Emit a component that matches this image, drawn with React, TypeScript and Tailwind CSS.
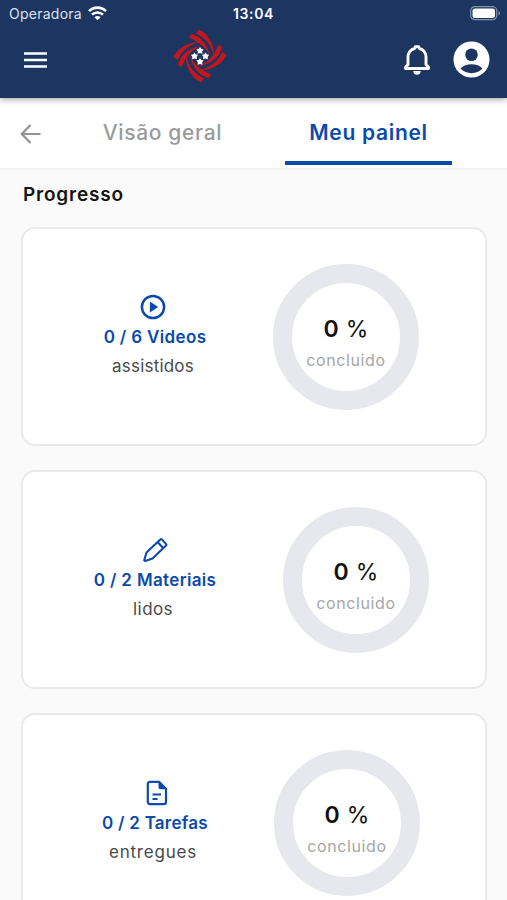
import React from 'react';

interface ProgressItem {
  id: string;
  count: string;
  label: string;
  percent: number;
  icon: React.ReactNode;
  iconClass: string;
  titleClass: string;
  labelClass: string;
  ringClass: string;
}

const PlayIcon = () => (
  <svg width="26" height="26" viewBox="0 0 26 26" fill="none">
    <circle cx="13" cy="13" r="11.1" stroke="#0b4aad" strokeWidth="2.5" />
    <path d="M9.9 7.6v10.8l8.3-5.4z" fill="#0b4aad" />
  </svg>
);

const PencilIcon = () => (
  <svg width="26" height="26" viewBox="0 0 26 26" fill="none" stroke="#0b4aad" strokeWidth="2.1" strokeLinejoin="round">
    <path d="M18.3 2.4 4.500 15.500 2.200 23.200 3.200 24 10.500 21.500 24 8.400c.5-.5.5-1 0-1.500L19.900 2.400c-.5-.5-1.100-.5-1.600 0z" />
    <path d="m15.6 5 5.500 6" />
  </svg>
);

const FileIcon = () => (
  <svg width="22" height="26" viewBox="0 0 22 26" fill="none">
    <path d="M4 1.800h9l7 7V22a2.200 2.200 0 0 1-2.200 2.200H4A2.200 2.200 0 0 1 1.800 22V4A2.200 2.200 0 0 1 4 1.800z" stroke="#0b4aad" strokeWidth="2.2" strokeLinejoin="round" />
    <path d="M12.500 1.500v5.800a2 2 0 0 0 2 2h6z" fill="#0b4aad" />
    <path d="M6.500 14.500h8.500M6.500 19h5" stroke="#0b4aad" strokeWidth="2.1" />
  </svg>
);

const Logo = () => (
  <svg width="54" height="54" viewBox="-27 -27 54 54" fill="none">
    {[0, 90, 180, 270].map((angle) => (
      <g key={angle} transform={`rotate(${angle})`} fill="#c4161c">
        <path d="M-1-26.500C6-23.500 15-13 14 1 12-11 4-19-4-22.500z" />
        <path d="M-9-22.500C-1-20 8-13 10 1 6-9-1-14-11-18.500z" />
      </g>
    ))}
    {[[0, -5.5], [5.5, 0], [0, 5.5], [-5.5, 0]].map(([x, y]) => (
      <path key={`${x},${y}`} transform={`translate(${x} ${y})`} d="M0-3.600 1.400-1.600 3.600-1.200 2.200.8 2.400 3.200 0 2.500-2.400 3.200-2.200.8-3.600-1.200-1.400-1.600z" fill="#fff" />
    ))}
  </svg>
);

const StatusBar = () => (
  <div className="grid h-7 grid-cols-3 items-center pl-[9px] pr-[6px] text-[14px]">
    <div className="-mt-0.5 flex items-center gap-[6px]">
      <span className="tracking-[0.25px] text-[#dce2ec]">Operadora</span>
      <svg width="19" height="15" viewBox="0 0 19 15" fill="none" stroke="#fff" strokeWidth="2.6">
        <path d="M1 5.200a12 12 0 0 1 17 0M4 8.700a7.800 7.800 0 0 1 11 0" />
        <path d="M6.400 11.200a4.400 4.400 0 0 1 6.200 0L9.500 14.300z" fill="#fff" stroke="none" />
      </svg>
    </div>
    <span className="-mt-0.5 -ml-[3px] text-center font-semibold tracking-[0.6px]">13:04</span>
    <svg className="-mt-0.5 justify-self-end" width="31" height="15" viewBox="0 0 31 15">
      <rect x=".7" y=".7" width="26" height="13" rx="4" fill="none" stroke="#8291ae" strokeWidth="1.2" />
      <rect x="2.5" y="2.5" width="22.5" height="9.5" rx="2.5" fill="#fff" />
      <path d="M28.500 5v4.500c2-.8 2-3.700 0-4.500z" fill="#8291ae" />
    </svg>
  </div>
);

const Header = () => (
  <header className="relative z-10 h-[98px] bg-[#1d3661] text-white shadow-[0_2px_6px_rgba(40,20,20,0.35)]">
    <StatusBar />
    <div className="flex h-[63px] items-center pl-6 pr-[17px]">
      <svg width="23" height="16" viewBox="0 0 23 16" stroke="#fff" strokeWidth="2.6">
        <path d="M0 1.500h23M0 8h23M0 14.500h23" />
      </svg>
      <div className="ml-[126px] -mt-[7px]">
        <Logo />
      </div>
      <svg className="ml-auto" width="28" height="30" viewBox="0 0 28 30" fill="none" stroke="#fff" strokeWidth="2.9" strokeLinejoin="round">
        <path d="M2.500 23.500V22L5 19.700v-7.500c0-4.600 2.800-7.900 6.600-8.700l.7-1.700h3.400l.7 1.700c3.800.8 6.600 4.100 6.600 8.700v7.500l2.500 2.300v1.500z" />
        <path d="M10.300 26h7.400a3.700 3.700 0 0 1-7.400 0z" fill="#fff" stroke="none" />
      </svg>
      <svg className="ml-[22px]" width="37" height="37" viewBox="0 0 37 37">
        <circle cx="18.5" cy="18.5" r="18" fill="#fff" />
        <circle cx="18.5" cy="13.8" r="6.3" fill="#1d3661" />
        <path d="M7.500 27.500c4.500-5.700 17.500-5.700 22 0-5.500 6.200-16.500 6.200-22 0z" fill="#1d3661" />
      </svg>
    </div>
  </header>
);

const Tabs = () => (
  <nav className="flex h-[72px] border-b-2 border-[#f1f2f3] bg-white pl-5">
    <svg className="mt-[26px]" width="21" height="20" viewBox="0 0 21 20" fill="none" stroke="#929292" strokeWidth="2.2">
      <path d="M20.500 10H2M10.500 1 1.800 10l8.700 9" />
    </svg>
    <button className="ml-[38px] h-[67px] w-[167px] pt-[3px] text-[21px] font-medium tracking-[0.65px] text-[#9b9b9b]">Visão geral</button>
    <button className="ml-[39px] h-[67px] w-[167px] border-b-4 border-[#0b4aad] pt-[6px] text-[21px] font-semibold tracking-[0.7px] text-[#0b4aad]">Meu painel</button>
  </nav>
);

const ProgressCard: React.FC<{ item: ProgressItem }> = ({ item }) => (
  <section className="flex h-[219px] shrink-0 items-center rounded-[14px] border-2 border-[#e9eaec] bg-white">
    <div className="ml-[52px] flex w-[160px] flex-col items-center">
      <div className={`flex h-[26px] items-center ${item.iconClass}`}>{item.icon}</div>
      <p className={`mt-[4px] whitespace-nowrap text-[17px] leading-[26px] font-semibold text-[#0b4aad] ${item.titleClass}`}>{item.count}</p>
      <p className={`mt-[3px] mr-1 text-[17px] leading-[26px] text-[#4a4a4a] ${item.labelClass}`}>{item.label}</p>
    </div>
    <div className={`flex h-[146px] w-[146px] flex-col items-center justify-center rounded-full border-[19px] border-[#e7e8ee] ${item.ringClass}`}>
      <p className="mt-[16px] text-[23px] leading-7 tracking-[0.3px] text-[#111]">
        <span className="font-semibold">{item.percent}</span> %
      </p>
      <p className="mt-[3px] text-[16px] leading-7 tracking-[0.6px] text-[#a6a6a6]">concluido</p>
    </div>
  </section>
);

const App: React.FC = () => {
  const items: ProgressItem[] = [
    { id: 'videos', count: '0 / 6 Videos', label: 'assistidos', percent: 0, icon: <PlayIcon />, iconClass: 'mr-1', titleClass: 'tracking-[0.35px]', labelClass: 'tracking-[0.2px]', ringClass: 'ml-[38px]' },
    { id: 'materiais', count: '0 / 2 Materiais', label: 'lidos', percent: 0, icon: <PencilIcon />, iconClass: '', titleClass: 'tracking-[0.35px]', labelClass: 'tracking-[0.4px]', ringClass: 'ml-[48px]' },
    { id: 'tarefas', count: '0 / 2 Tarefas', label: 'entregues', percent: 0, icon: <FileIcon />, iconClass: 'ml-1', titleClass: 'tracking-[0.25px]', labelClass: 'tracking-[0.8px]', ringClass: 'ml-[39px]' },
  ];

  return (
    <div className="h-[900px] w-[507px] overflow-hidden bg-[#fafafa] font-['Inter',sans-serif]">
      <Header />
      <Tabs />
      <main className="pl-[21px] pr-5">
        <h1 className="ml-[2px] pt-[11px] text-[19px] leading-7 font-semibold tracking-[0.8px] text-[#141414]">Progresso</h1>
        <div className="mt-[18px] flex flex-col gap-6">
          {items.map((item) => (
            <ProgressCard key={item.id} item={item} />
          ))}
        </div>
      </main>
    </div>
  );
};

export default App;
